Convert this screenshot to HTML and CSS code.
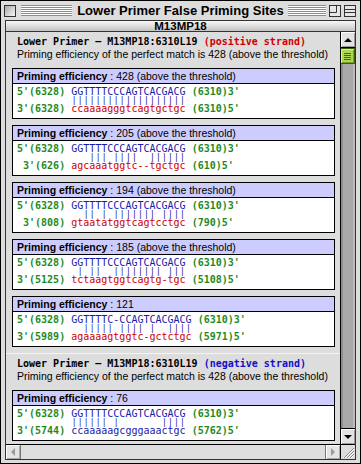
FILE: index.html
```html
<!DOCTYPE html>
<html>
<head>
<meta charset="utf-8">
<title>Lower Primer False Priming Sites</title>
<link rel="stylesheet" href="styles.css">
</head>
<body>
<div class="window">
  <div class="titlebar">
    <div class="tb-side tb-left">
      <span class="wbox close"></span>
      <span class="stripes"></span>
    </div>
    <div class="title">Lower Primer False Priming Sites</div>
    <div class="tb-side tb-right">
      <span class="stripes"></span>
      <span class="wbox"><svg width="12" height="12" viewBox="0 0 12 12"><rect x="0.5" y="0.5" width="11" height="11" fill="#e6e6e6" stroke="#333"/><path d="M0.5 7.5H7.5V0.5" fill="none" stroke="#333"/></svg></span>
      <span class="wbox"><svg width="12" height="12" viewBox="0 0 12 12"><rect x="0.5" y="0.5" width="11" height="11" fill="#e6e6e6" stroke="#333"/><path d="M0.5 4.5H11.5M0.5 7.5H11.5" stroke="#333"/></svg></span>
    </div>
  </div>
  <div class="panel">
    <div class="listhead">M13MP18</div>
    <div class="mid">
      <div class="content">
        <section class="sec">
          <div class="sec-head">
            <div class="h">Lower Primer – M13MP18:6310L19 <span class="pos">(positive strand)</span></div>
            <div class="sub">Priming efficiency of the perfect match is 428 (above the threshold)</div>
          </div>
          <div class="card">
            <div class="card-h"><b>Priming efficiency</b> : 428 (above the threshold)</div>
            <div class="card-b">
              <div class="seq"><span class="lbl">5'(6328)</span> <span class="top">GGTTTTCCCAGTCACGACG</span> <span class="lbl">(6310)3'</span></div>
              <div class="bars">         |||||||||||||||||||</div>
              <div class="seq"><span class="lbl">3'(6328)</span> <span class="bot">ccaaaagggtcagtgctgc</span> <span class="lbl">(6310)5'</span></div>
            </div>
          </div>
          <div class="card">
            <div class="card-h"><b>Priming efficiency</b> : 205 (above the threshold)</div>
            <div class="card-b">
              <div class="seq"><span class="lbl">5'(6328)</span> <span class="top">GGTTTTCCCAGTCACGACG</span> <span class="lbl">(6310)3'</span></div>
              <div class="bars">            ||| ||||  ||||||</div>
              <div class="seq"><span class="lbl"> 3'(626)</span> <span class="bot">agcaaatggtc--tgctgc</span> <span class="lbl">(610)5'</span></div>
            </div>
          </div>
          <div class="card">
            <div class="card-h"><b>Priming efficiency</b> : 194 (above the threshold)</div>
            <div class="card-b">
              <div class="seq"><span class="lbl">5'(6328)</span> <span class="top">GGTTTTCCCAGTCACGACG</span> <span class="lbl">(6310)3'</span></div>
              <div class="bars">           || | ||||||| ||||</div>
              <div class="seq"><span class="lbl"> 3'(808)</span> <span class="bot">gtaatatggtcagtcctgc</span> <span class="lbl">(790)5'</span></div>
            </div>
          </div>
          <div class="card">
            <div class="card-h"><b>Priming efficiency</b> : 185 (above the threshold)</div>
            <div class="card-b">
              <div class="seq"><span class="lbl">5'(6328)</span> <span class="top">GGTTTTCCCAGTCACGACG</span> <span class="lbl">(6310)3'</span></div>
              <div class="bars">          | ||  |||||||| |||</div>
              <div class="seq"><span class="lbl">3'(5125)</span> <span class="bot">tctaagtggtcagtg-tgc</span> <span class="lbl">(5108)5'</span></div>
            </div>
          </div>
          <div class="card">
            <div class="card-h"><b>Priming efficiency</b> : 121</div>
            <div class="card-b">
              <div class="seq"><span class="lbl">5'(6328)</span> <span class="top">GGTTTTC-CCAGTCACGACG</span> <span class="lbl">(6310)3'</span></div>
              <div class="bars">           ||||| |||| |  ||||</div>
              <div class="seq"><span class="lbl">3'(5989)</span> <span class="bot">agaaaagtggtc-gctctgc</span> <span class="lbl">(5971)5'</span></div>
            </div>
          </div>
        </section>
        <section class="sec sec2">
          <div class="sec-head">
            <div class="h">Lower Primer – M13MP18:6310L19 <span class="neg">(negative strand)</span></div>
            <div class="sub">Priming efficiency of the perfect match is 428 (above the threshold)</div>
          </div>
          <div class="card">
            <div class="card-h"><b>Priming efficiency</b> : 76</div>
            <div class="card-b">
              <div class="seq"><span class="lbl">5'(6328)</span> <span class="top">GGTTTTCCCAGTCACGACG</span> <span class="lbl">(6310)3'</span></div>
              <div class="bars blue">         |||||| |       ||||</div>
              <div class="seq"><span class="lbl">3'(5744)</span> <span class="top">ccaaaaagcgggaaactgc</span> <span class="lbl">(5762)5'</span></div>
            </div>
          </div>
        </section>
      </div>
      <div class="vscroll">
        <div class="varrow up"><svg width="14" height="15" viewBox="0 0 14 15"><polygon points="3,10 11,10 7,6" fill="#000"/></svg></div>
        <div class="thumb"><svg width="13" height="14" viewBox="0 0 13 14"><path d="M3 4.5H10M3 6.5H10M3 8.5H10M3 10.5H10" stroke="#3f6a12"/></svg></div>
        <div class="vtrack"></div>
        <div class="varrow down"><svg width="14" height="15" viewBox="0 0 14 15"><polygon points="3,6 11,6 7,10" fill="#000"/></svg></div>
      </div>
    </div>
    <div class="hscroll">
      <div class="harrow left"><svg width="14" height="14" viewBox="0 0 14 14"><polygon points="5,7 9,3 9,11" fill="#9a9a9a"/></svg></div>
      <div class="htrack"></div>
      <div class="harrow right"><svg width="14" height="14" viewBox="0 0 14 14"><polygon points="9,7 5,3 5,11" fill="#9a9a9a"/></svg></div>
      <div class="grow"><svg width="14" height="14" viewBox="0 0 14 14"><path d="M3 13L13 3M6 13L13 6M9 13L13 9" stroke="#888"/><path d="M4 13L13 4M7 13L13 7M10 13L13 10" stroke="#fff"/></svg></div>
    </div>
  </div>
</div>
</body>
</html>
```

FILE: styles.css
```css
* { box-sizing: border-box; margin: 0; padding: 0; }
html, body { width: 361px; height: 464px; overflow: hidden; background: #fff; }
body { font-family: "Liberation Sans", Arial, sans-serif; color: #000; }

.window {
  width: 361px; height: 464px;
  border: 1px solid #000;
  background: #dddddd;
  display: flex; flex-direction: column;
}

/* title bar */
.titlebar {
  height: 19px; flex: none;
  display: grid; grid-template-columns: 1fr auto 1fr; align-items: center;
}
.tb-side { display: flex; align-items: center; height: 19px; }
.tb-left { padding-left: 3px; }
.tb-right { padding-right: 4px; }
.stripes {
  flex: 1; height: 11px;
  background: repeating-linear-gradient(to bottom, #8c8c8c 0 1px, #ffffff 1px 2px);
}
.tb-left .stripes { margin: 0 4px 0 5px; }
.tb-right .stripes { margin: 0 3px 0 3px; }
.tb-right .wbox + .wbox { margin-left: 3px; }
.wbox { width: 12px; height: 12px; flex: none; display: block; }
.wbox svg { display: block; }
.close {
  border: 1px solid #333;
  background: linear-gradient(135deg, #a8a8a8, #f6f6f6);
}
.title {
  font-weight: bold; font-size: 13px; line-height: 19px;
  white-space: nowrap; padding: 0 1px;
}

/* panel */
.panel {
  flex: 1; min-height: 0;
  margin: 0 4px 3px;
  border: 1px solid #333;
  display: flex; flex-direction: column;
}
.listhead {
  flex: none; height: 11px;
  border-bottom: 1px solid #333;
  background: linear-gradient(#f8f8f8, #c4c4c4);
  font-weight: bold; font-size: 11.5px; line-height: 10px;
  text-align: center;
}
.mid { flex: 1; min-height: 0; display: flex; }
.content { flex: 1; overflow: hidden; background: #dddddd; }

/* sections */
.sec-head { padding: 3px 0 7px 11px; }
.sec2 { border-top: 1px solid #f4f4f4; }
.h {
  font-family: "DejaVu Sans Mono", monospace; font-weight: bold;
  font-size: 10px; line-height: 13px; white-space: pre;
}
.pos { color: #d00000; }
.neg { color: #1010c8; }
.sub { font-size: 10.5px; line-height: 13px; white-space: nowrap; }

/* cards */
.card {
  margin: 0 5px 6px 6px;
  border: 1px solid #000;
  background: #fff;
}
.card-h {
  height: 15px;
  background: #ccccff;
  border-bottom: 1px solid #000;
  padding-left: 4px;
  font-size: 10.5px; line-height: 14px; white-space: nowrap;
}
.card-b {
  padding: 3px 0 4px 4px;
  font-family: "DejaVu Sans Mono", monospace; font-size: 10px;
}
.seq { line-height: 10px; height: 10px; white-space: pre; }
.bars {
  height: 7px; line-height: 7px; white-space: pre;
  font-size: 8px; letter-spacing: 1.2px; padding-left: 0.6px;
  color: #14148a;
}
.bars.blue { color: #1a1ab0; }
.lbl { color: #1e8a1e; font-weight: bold; }
.top { color: #1a1aaa; }
.bot { color: #cc0000; }

/* vertical scrollbar */
.vscroll {
  width: 15px; flex: none;
  border-left: 1px solid #000;
  display: flex; flex-direction: column;
  background: #a8a8a8;
}
.varrow {
  height: 16px; flex: none;
  background: #e2e2e2;
  box-shadow: inset 1px 1px #fff, inset -1px -1px #9a9a9a;
}
.varrow svg { display: block; }
.varrow.up { border-bottom: 1px solid #000; }
.varrow.down { border-top: 1px solid #000; }
.thumb {
  height: 16px; flex: none;
  border: 1px solid #3a5e10;
  border-left: none;
  background: #aed650;
  box-shadow: inset 1px 1px #d8f29c, inset -1px -1px #74a02a;
}
.thumb svg { display: block; }
.vtrack {
  flex: 1;
  background: #a8a8a8;
  box-shadow: inset 2px 0 #8e8e8e, inset -2px 0 #bcbcbc;
}

/* horizontal scrollbar */
.hscroll {
  height: 15px; flex: none;
  border-top: 1px solid #000;
  display: flex;
}
.harrow {
  width: 15px; flex: none;
  background: #e4e4e4;
  box-shadow: inset 1px 1px #fff, inset -1px -1px #aaa;
}
.harrow svg, .grow svg { display: block; }
.harrow.left { border-right: 1px solid #777; }
.harrow.right { border-left: 1px solid #777; }
.htrack { flex: 1; background: #dedede; }
.grow {
  width: 15px; flex: none;
  border-left: 1px solid #000;
  background: #dddddd;
}
```
